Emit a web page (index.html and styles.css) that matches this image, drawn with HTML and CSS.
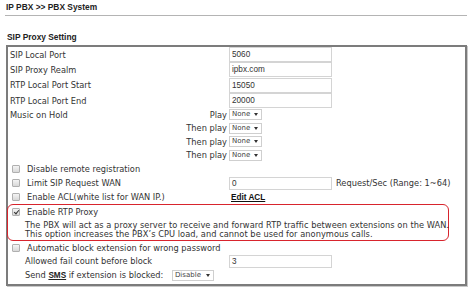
FILE: index.html
```html
<!DOCTYPE html>
<html>
<head>
<meta charset="utf-8">
<link rel="stylesheet" href="styles.css">
</head>
<body>
<div class="page">
  <div class="title">IP PBX &gt;&gt; PBX System</div>
  <div class="rule"></div>
  <div class="section">SIP Proxy Setting</div>
  <div class="box">
    <div class="row h15"><div class="label">SIP Local Port</div><div class="input">5060</div></div>
    <div class="row h15"><div class="label">SIP Proxy Realm</div><div class="input">ipbx.com</div></div>
    <div class="row h16"><div class="label">RTP Local Port Start</div><div class="input">15050</div></div>
    <div class="row h15"><div class="label">RTP Local Port End</div><div class="input">20000</div></div>
    <div class="row h13"><div class="label split"><span>Music on Hold</span><span>Play</span></div><div class="select">None</div></div>
    <div class="row h14"><div class="label end">Then play</div><div class="select">None</div></div>
    <div class="row h13"><div class="label end">Then play</div><div class="select">None</div></div>
    <div class="row h14"><div class="label end">Then play</div><div class="select">None</div></div>
    <div class="row h14"><div class="label chk"><span class="cb"></span>Disable remote registration</div></div>
    <div class="row h14"><div class="label chk"><span class="cb"></span>Limit SIP Request WAN</div><div class="input short">0</div><span class="note">Request/Sec (Range: 1~64)</span></div>
    <div class="row h14"><div class="label chk"><span class="cb"></span>Enable ACL(white list for WAN IP.)</div><a class="link">Edit ACL</a></div>
    <div class="highlight">
      <div class="row h14"><div class="label chk"><span class="cb checked"></span>Enable RTP Proxy</div></div>
      <div class="desc">The PBX will act as a proxy server to receive and forward RTP traffic between extensions on the WAN.<br>This option increases the PBX’s CPU load, and cannot be used for anonymous calls.</div>
    </div>
    <div class="row h13"><div class="label chk"><span class="cb"></span>Automatic block extension for wrong password</div></div>
    <div class="row h14"><div class="label ind">Allowed fail count before block</div><div class="input short">3</div></div>
    <div class="row h15"><div class="label ind">Send <b class="u">SMS</b> if extension is blocked: <span class="select wide">Disable</span></div></div>
  </div>
</div>
</body>
</html>
```

FILE: styles.css
```css
html, body {
  margin: 0;
  padding: 0;
  background: #fff;
}
body {
  font-family: "DejaVu Sans", Verdana, sans-serif;
  font-size: 8.25px;
  color: #333;
}
.page {
  width: 474px;
  height: 293px;
  overflow: hidden;
}
.title {
  font-family: "Liberation Sans", Arial, sans-serif;
  font-weight: bold;
  font-size: 8.4px;
  color: #222;
  padding: 2px 0 0 6px;
  height: 11px;
  line-height: 11px;
}
.rule {
  margin: 2px 7px 0 5px;
  height: 1px;
  background: #b4b4b4;
}
.section {
  font-family: "Liberation Sans", Arial, sans-serif;
  font-weight: bold;
  font-size: 8.4px;
  color: #222;
  margin: 16px 0 0 7px;
  height: 11px;
  line-height: 11px;
}
.box {
  margin: 2px 0 0 6px;
  width: 457px;
  height: 237px;
  border: 2px solid #7c7c7c;
  box-shadow: 1px 1px 0 #c8c8c8;
  display: flex;
  flex-direction: column;
}
.row {
  display: flex;
  align-items: center;
  white-space: nowrap;
  flex: none;
}
.h16 { height: 16px; }
.h15 { height: 15px; }
.h14 { height: 14px; }
.h13 { height: 13px; }
.label {
  width: 219px;
  padding-left: 2px;
  flex: none;
  display: flex;
  align-items: center;
}
.label.split { justify-content: space-between; padding-right: 2px; width: 217px; }
.label.end { justify-content: flex-end; padding-right: 2px; width: 217px; }
.label.chk { padding-left: 4px; width: 217px; }
.label.ind { display: block; padding-left: 17px; width: 204px; line-height: 14px; }
.cb {
  width: 6px;
  height: 6px;
  border: 1px solid #b0b0b0;
  border-radius: 1px;
  background: linear-gradient(#f4f4f4, #d8d8d8);
  margin-right: 7px;
  position: relative;
  flex: none;
}
.cb.checked::after {
  content: "";
  position: absolute;
  left: 1.5px;
  top: 0px;
  width: 2px;
  height: 4px;
  border-right: 1.2px solid #333;
  border-bottom: 1.2px solid #333;
  transform: rotate(40deg);
}
.input {
  width: 99px;
  height: 13px;
  border: 1px solid #d4d4d4;
  font-family: "Liberation Sans", Arial, sans-serif;
  font-size: 8.2px;
  line-height: 13px;
  padding-left: 2px;
  color: #333;
  box-sizing: content-box;
}
.input.short { height: 11px; line-height: 11px; }
.select {
  width: 29px;
  height: 9px;
  border: 1px solid #cfcfcf;
  font-size: 7px;
  line-height: 9px;
  padding-left: 2px;
  position: relative;
  color: #444;
}
.select::after {
  content: "";
  position: absolute;
  right: 3px;
  top: 3px;
  border-left: 2px solid transparent;
  border-right: 2px solid transparent;
  border-top: 3px solid #333;
}
.select.wide {
  display: inline-block;
  vertical-align: middle;
  width: 38px;
  margin-left: 6px;
  text-align: left;
}
.note { margin-left: 4px; }
.link {
  font-family: "Liberation Sans", Arial, sans-serif;
  font-weight: bold;
  text-decoration: underline;
  color: #111;
  margin-left: 2px;
  font-size: 8.2px;
}
.u {
  font-family: "Liberation Sans", Arial, sans-serif;
  text-decoration: underline;
  font-size: 8.2px;
  color: #222;
}
.highlight {
  margin-left: -1px;
  width: 440px;
  height: 35px;
  border: 1.5px solid #d8242d;
  border-radius: 6px;
  flex: none;
}
.desc {
  padding-left: 17px;
  line-height: 9px;
  white-space: nowrap;
  margin-top: 2px;
  letter-spacing: 0.04px;
}
```
